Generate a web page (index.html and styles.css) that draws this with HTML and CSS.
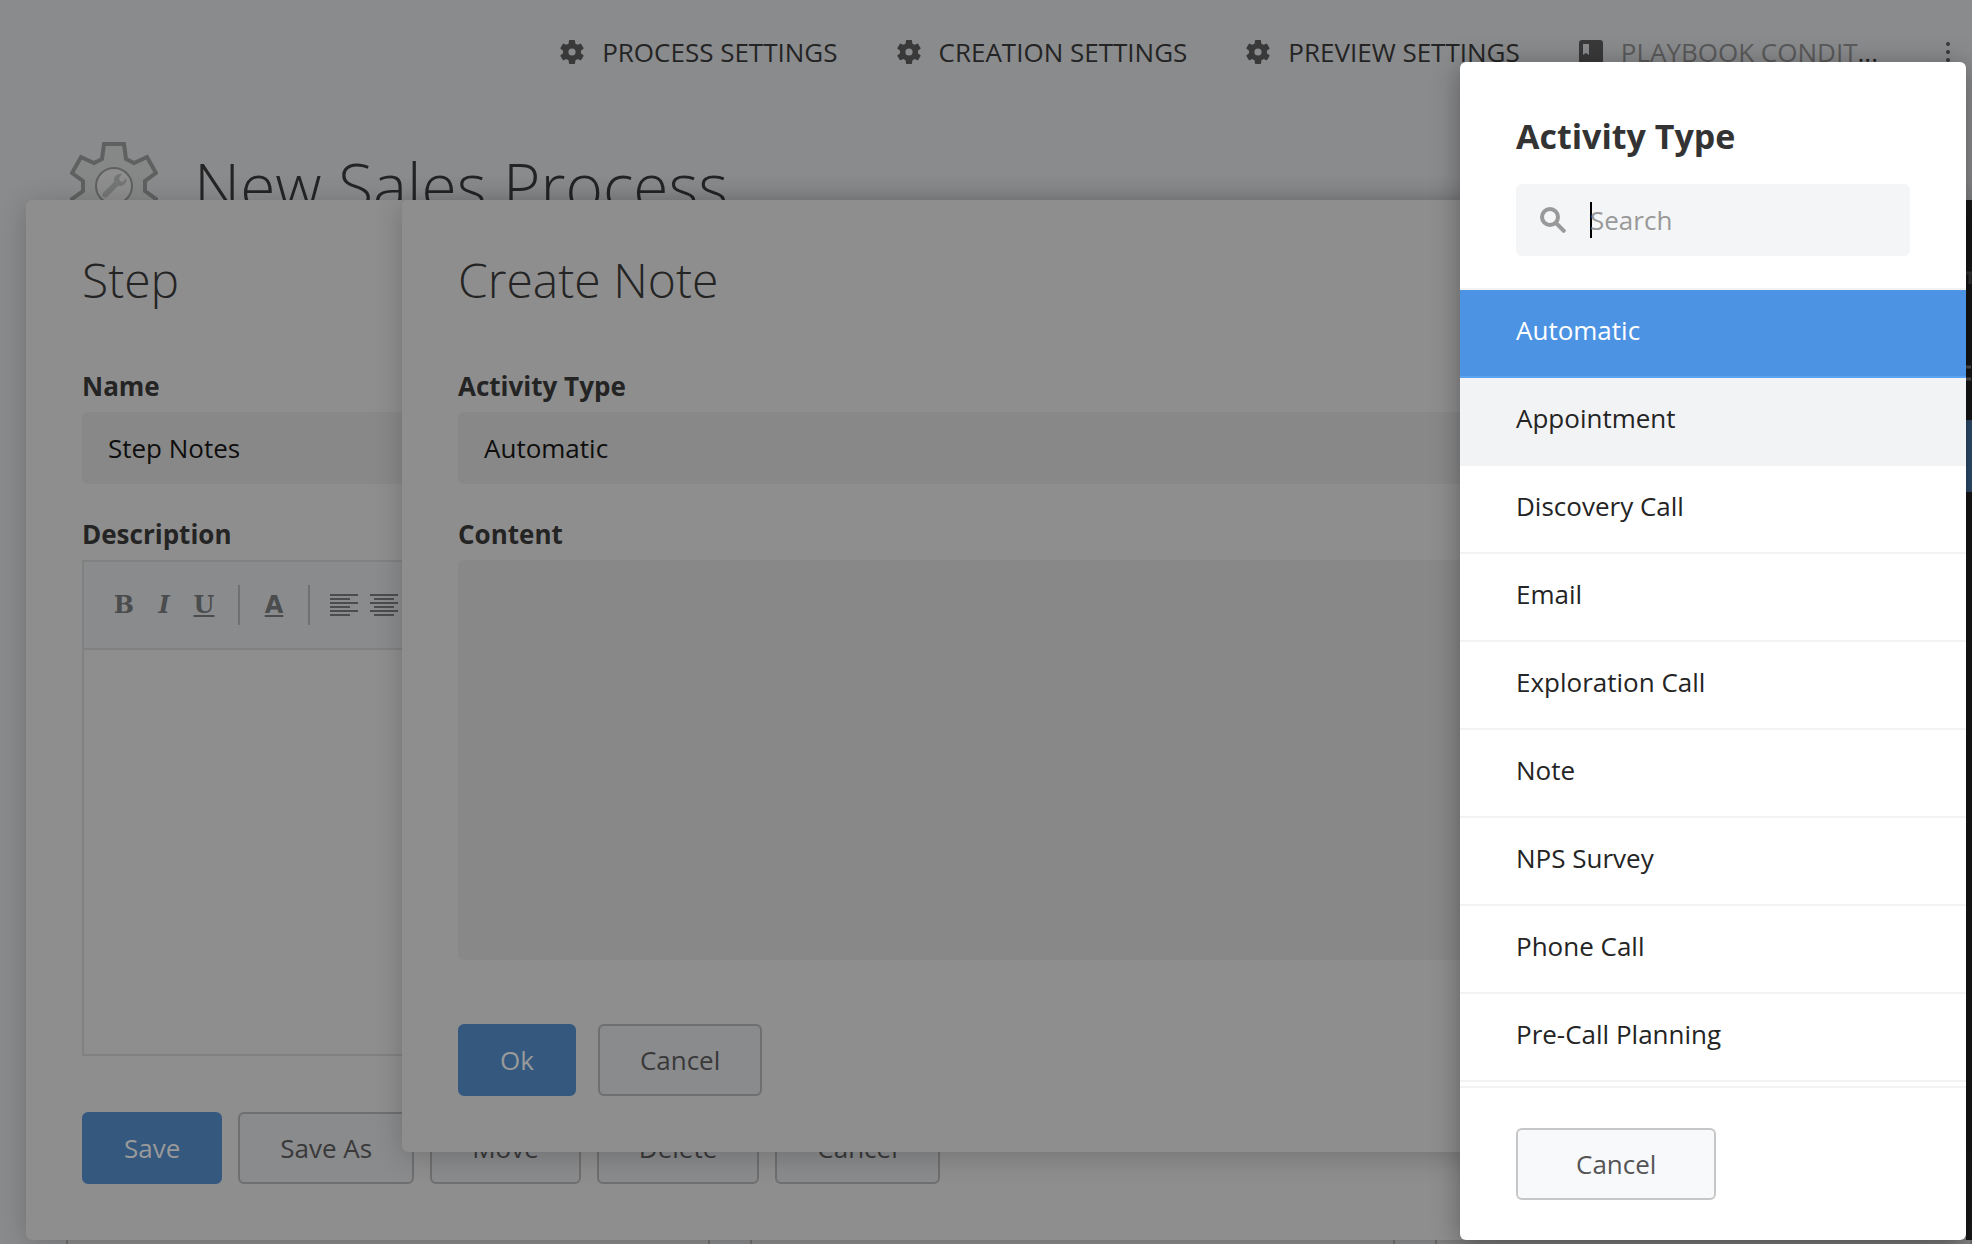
FILE: index.html
```
<!doctype html>
<html lang="en">
  <head>
    <meta charset="UTF-8" />
    <meta name="viewport" content="width=device-width, initial-scale=1.0" />
    <title>New Sales Process</title>
    <link rel="stylesheet" href="styles.css">
  </head>

  <body>
    <!-- shared icon -->
    <svg class="sprite" aria-hidden="true">
      <symbol id="cog" viewBox="2 2 20 20">
        <path fill-rule="evenodd" d="M19.4 13c0-.3.1-.6.1-1s0-.7-.1-1l2.100-1.650c.2-.15.25-.42.12-.64l-2-3.460c-.12-.22-.39-.3-.61-.22l-2.490 1c-.52-.4-1.080-.73-1.690-.98l-.38-2.650C14.460 2.180 14.250 2 14 2h-4c-.25 0-.46.18-.49.42l-.38 2.650c-.61.25-1.170.59-1.690.98l-2.490-1c-.23-.09-.49 0-.61.22l-2 3.460c-.13.22-.07.49.12.64L4.570 11c-.04.32-.07.65-.07.98s.03.66.07.98l-2.110 1.650c-.19.15-.24.42-.12.64l2 3.460c.12.22.39.3.61.22l2.490-1c.52.4 1.080.73 1.690.98l.38 2.650c.03.24.24.42.49.42h4c.25 0 .46-.18.49-.42l.38-2.650c.61-.25 1.170-.59 1.690-.98l2.490 1c.23.09.49 0 .61-.22l2-3.460c.12-.22.07-.49-.12-.64L19.400 13zM12 15a3 3 0 1 1 0-6 3 3 0 0 1 0 6z" />
      </symbol>
    </svg>

    <header class="topbar">
      <nav class="topnav">
        <a href="#"><svg class="icon"><use href="#cog" /></svg>PROCESS SETTINGS</a>
        <a href="#"><svg class="icon"><use href="#cog" /></svg>CREATION SETTINGS</a>
        <a href="#"><svg class="icon"><use href="#cog" /></svg>PREVIEW SETTINGS</a>
        <a href="#" class="muted">
          <svg class="icon" viewBox="0 0 24 24"><path fill-rule="evenodd" d="M3 0h18a3 3 0 0 1 3 3v18a3 3 0 0 1-3 3H3a3 3 0 0 1-3-3V3a3 3 0 0 1 3-3zM4 4v11l3-2 3 2V4z" /></svg>
          <span>PLAYBOOK CONDIT<b>...</b></span>
        </a>
      </nav>
      <button type="button" class="more" aria-label="More">
        <svg viewBox="0 0 4 24"><circle cx="2" cy="4" r="2" /><circle cx="2" cy="12" r="2" /><circle cx="2" cy="20" r="2" /></svg>
      </button>
    </header>

    <div class="page-title">
      <svg class="gear" viewBox="0 0 88 88">
        <path d="M34 2h20l2 15 8 4 13-6 9 16-11 8v10l11 8-9 16-13-6-8 4-2 15H34l-2-15-8-4-13 6-9-16 11-8V39L2 31l9-16 13 6 8-4z" />
        <circle cx="44" cy="44" r="18" />
        <path class="wrench" d="M33 51l11-11c-1-5 3-9 8-8l-3 4 1 3 3 1 3-4c2 5-3 9-8 8L37 55c-3 2-6-1-4-4z" />
      </svg>
      <h1>New Sales Process</h1>
    </div>

    <div class="columns">
      <div class="column"></div>
      <div class="column"></div>
      <div class="column"></div>
    </div>

    <aside class="preview">
      <svg viewBox="0 0 6 220" aria-hidden="true">
        <path d="M0 73h6M4 73v11" />
        <path class="light" d="M0 167h5M0 179h5" />
      </svg>
      <div class="preview-bar"></div>
    </aside>

    <section class="panel step-panel">
      <h2>Step</h2>
      <div class="field">
        <label for="stepName">Name</label>
        <input type="text" id="stepName" value="Step Notes" />
      </div>
      <div class="field grow">
        <label for="stepDescription">Description</label>
        <div class="editor">
          <div class="toolbar">
            <button type="button" class="tool bold">B</button>
            <button type="button" class="tool italic">I</button>
            <button type="button" class="tool underline">U</button>
            <span class="divider"></span>
            <button type="button" class="tool color">A</button>
            <span class="divider"></span>
            <button type="button" class="tool" aria-label="Align left">
              <svg viewBox="0 0 28 24"><path d="M0 2h28M0 6h20M0 10h28M0 14h20M0 18h28M0 22h20" /></svg>
            </button>
            <button type="button" class="tool" aria-label="Align center">
              <svg viewBox="0 0 28 24"><path d="M0 2h28M4 6h20M0 10h28M4 14h20M0 18h28M4 22h20" /></svg>
            </button>
          </div>
          <textarea id="stepDescription"></textarea>
        </div>
      </div>
      <div class="actions">
        <button type="button" class="btn primary">Save</button>
        <button type="button" class="btn">Save As</button>
        <button type="button" class="btn">Move</button>
        <button type="button" class="btn">Delete</button>
        <button type="button" class="btn">Cancel</button>
      </div>
    </section>

    <section class="panel note-panel">
      <h2>Create Note</h2>
      <div class="field">
        <label for="activityType">Activity Type</label>
        <input type="text" id="activityType" value="Automatic" />
      </div>
      <div class="field grow">
        <label for="content">Content</label>
        <textarea id="content"></textarea>
      </div>
      <div class="actions">
        <button type="button" class="btn primary">Ok</button>
        <button type="button" class="btn">Cancel</button>
      </div>
    </section>

    <section class="picker">
      <h3>Activity Type</h3>
      <div class="search">
        <svg viewBox="0 0 26 26"><circle cx="10" cy="10" r="8" /><path d="M16 16l9 9" /></svg>
        <span class="caret"></span>
        <input type="text" placeholder="Search" aria-label="Search" />
      </div>
      <ul class="options">
        <li><button type="button" class="selected">Automatic</button></li>
        <li><button type="button" class="hovered">Appointment</button></li>
        <li><button type="button">Discovery Call</button></li>
        <li><button type="button">Email</button></li>
        <li><button type="button">Exploration Call</button></li>
        <li><button type="button">Note</button></li>
        <li><button type="button">NPS Survey</button></li>
        <li><button type="button">Phone Call</button></li>
        <li><button type="button">Pre-Call Planning</button></li>
      </ul>
      <div class="picker-footer">
        <button type="button" class="btn">Cancel</button>
      </div>
    </section>
  </body>
</html>
```
FILE: styles.css
```
* {
  margin: 0;
  padding: 0;
  box-sizing: border-box;
  font-family: 'Open Sans', sans-serif;
}

body {
  position: relative;
  display: flex;
  flex-direction: column;
  height: 100vh;
  overflow: hidden;
  background-color: #8a8b8d;
  color: #242424;
  font-size: 26px;
}

button {
  border: none;
  background: none;
  font-size: 26px;
  cursor: pointer;
}

.sprite {
  position: absolute;
  width: 0;
  height: 0;
}

/* Top bar */
.topbar {
  display: flex;
  justify-content: flex-end;
  align-items: center;
  height: 104px;
  padding-right: 22px;
}

.topnav {
  display: flex;
  gap: 59px;
}

.topnav a {
  display: flex;
  align-items: center;
  gap: 18px;
  color: #242424;
  text-decoration: none;
  white-space: nowrap;
}

.topnav .muted {
  color: #5a5a5b;
}

.topnav b {
  color: #242424;
  font-weight: 400;
}

.icon {
  width: 24px;
  height: 24px;
  fill: #39393a;
}

.more {
  display: flex;
  margin-left: 68px;
}

.more svg {
  width: 4px;
  height: 24px;
  fill: #39393a;
}

/* Page title */
.page-title {
  display: flex;
  align-items: center;
  gap: 36px;
  padding: 38px 70px 0;
}

.gear {
  width: 88px;
  height: 88px;
  fill: #868787;
  stroke: #5f6160;
  stroke-width: 4;
}

.gear circle {
  fill: #8e8e8e;
  stroke-width: 2;
}

.gear .wrench {
  fill: #747575;
  stroke: none;
}

h1 {
  font-size: 64px;
  font-weight: 300;
  line-height: 88px;
}

.columns {
  display: grid;
  grid-template-columns: 6fr 6fr 5fr;
  flex: 1;
  gap: 40px;
  padding: 40px 0 0 66px;
}

.column {
  border: 2px solid #707070;
  border-bottom: none;
  background-color: #8a8a8a;
}

.preview {
  position: absolute;
  top: 200px;
  right: 0;
  bottom: 4px;
  width: 6px;
  background-color: #1b1b1b;
}

.preview svg {
  display: block;
  width: 6px;
  height: 220px;
  fill: none;
  stroke: #3c3c3c;
  stroke-width: 3;
}

.preview .light {
  stroke: #5c5c5c;
}

.preview-bar {
  height: 72px;
  background-color: #35587f;
}

/* Panels */
.panel {
  position: absolute;
  top: 200px;
  display: flex;
  flex-direction: column;
  padding: 48px 56px 56px;
  border-radius: 6px;
  background-color: #8e8e8e;
  box-shadow: 0 4px 28px rgba(0, 0, 0, 0.2);
}

.step-panel {
  right: 6px;
  bottom: 4px;
  left: 26px;
}

.note-panel {
  right: 6px;
  bottom: 92px;
  left: 402px;
}

h2 {
  margin-bottom: 56px;
  font-size: 48px;
  font-weight: 300;
  line-height: 64px;
}

.field {
  display: flex;
  flex-direction: column;
  gap: 8px;
  margin-bottom: 32px;
}

.field.grow {
  flex: 1;
  margin-bottom: 56px;
}

.note-panel .field.grow {
  margin-bottom: 64px;
}

label {
  font-weight: 700;
  line-height: 36px;
}

.field input {
  height: 72px;
  padding: 0 26px;
  border: none;
  border-radius: 6px;
  background-color: #888;
  color: #0e0e0e;
  font-size: 26px;
}

.field textarea {
  flex: 1;
  border: none;
  border-radius: 6px;
  background-color: #888;
  resize: none;
}

.editor {
  display: flex;
  flex: 1;
  flex-direction: column;
  border: 2px solid #808181;
}

.editor textarea {
  border-radius: 0;
  background: none;
}

.toolbar {
  display: flex;
  align-items: center;
  height: 88px;
  padding: 0 20px;
  border-bottom: 2px solid #808181;
  background-color: #8a8b8d;
}

.tool {
  display: flex;
  justify-content: center;
  width: 40px;
  color: #4b4c4d;
  font-family: 'DejaVu Serif', serif;
  font-size: 24px;
  font-weight: 700;
  line-height: 28px;
}

.tool.italic {
  font-style: italic;
}

.tool.underline {
  text-decoration: underline;
}

.tool.color {
  font-family: 'DejaVu Sans', sans-serif;
  text-decoration: underline;
}

.tool svg {
  width: 28px;
  height: 24px;
  stroke: #4b4c4d;
  stroke-width: 2;
}

.divider {
  width: 2px;
  height: 40px;
  margin: 0 14px;
  background-color: #6f7071;
}

.actions {
  display: flex;
  gap: 16px;
}

.note-panel .actions {
  gap: 22px;
}

.btn {
  height: 72px;
  padding: 0 40px;
  border: 2px solid #6f6f6f;
  border-radius: 6px;
  background-color: #8a8b8d;
  color: #39393a;
}

.btn.primary {
  border-color: #35587f;
  background-color: #35587f;
  color: #9a9a9a;
}

/* Activity type picker */
.picker {
  position: absolute;
  top: 62px;
  right: 6px;
  bottom: 4px;
  display: flex;
  flex-direction: column;
  width: 506px;
  border-radius: 6px;
  background-color: #fff;
  box-shadow: 0 4px 28px rgba(0, 0, 0, 0.35);
}

h3 {
  padding: 50px 56px 24px;
  color: #333;
  font-size: 34px;
  line-height: 48px;
}

.search {
  display: flex;
  align-items: center;
  height: 72px;
  margin: 0 56px 32px;
  padding: 0 24px;
  border-radius: 6px;
  background-color: #f4f5f7;
}

.search svg {
  width: 26px;
  height: 26px;
  margin-right: 24px;
  fill: none;
  stroke: #999;
  stroke-width: 4;
}

.caret {
  width: 2px;
  height: 36px;
  margin-right: -2px;
  background-color: #000;
}

.search input {
  flex: 1;
  min-width: 0;
  border: none;
  outline: none;
  background: none;
  font-size: 26px;
}

.search input::placeholder {
  color: #999;
}

.options {
  flex: 1;
  border-top: 2px solid #f3f3f4;
  border-bottom: 2px solid #f3f3f4;
  list-style: none;
  overflow: hidden;
}

.options button {
  display: block;
  width: 100%;
  height: 88px;
  padding: 0 56px 6px;
  border-bottom: 2px solid #f3f3f4;
  color: #242424;
  text-align: left;
}

.options .selected {
  border-color: #5ba3f2;
  background-color: #4c93e3;
  color: #fff;
}

.options .hovered {
  background-color: #f2f3f5;
}

.picker-footer {
  padding: 40px 56px;
}

.picker .btn {
  padding: 0 58px;
  border-color: #c6c7c8;
  background-color: #f8f9fb;
  color: #555;
}
```
